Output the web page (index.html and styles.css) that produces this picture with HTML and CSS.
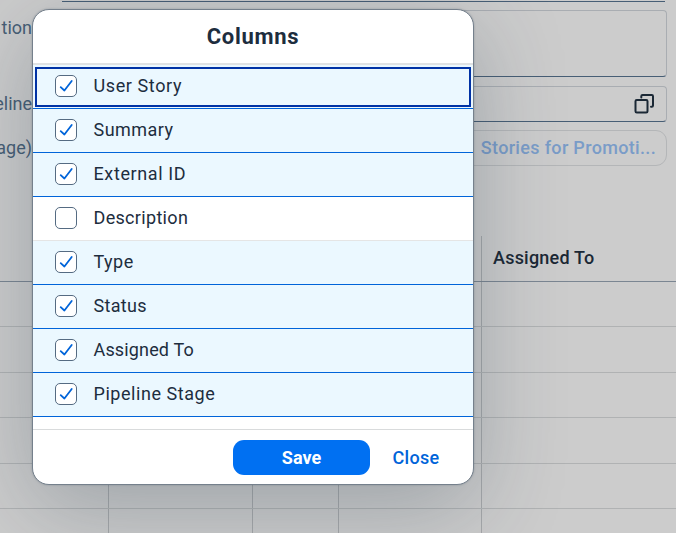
FILE: index.html
```html
<!DOCTYPE html>
<html lang="en">
<head>
<meta charset="utf-8">
<title>Columns</title>
<link rel="stylesheet" href="styles.css">
</head>
<body>
<svg class="defs" aria-hidden="true"><symbol id="check" viewBox="0 0 20 20"><path d="M4.7 11.2 8.4 14.5 15.7 5" fill="none" stroke="#0064d9" stroke-width="1.8" stroke-linecap="round" stroke-linejoin="round"/></symbol></svg>
<main class="page">
  <section class="form">
    <div class="field field-top"></div>
    <label class="label"><span>tion</span></label>
    <div class="field field-area"></div>
    <label class="label"><span>eline</span></label>
    <div class="field field-help">
      <svg class="help-icon" width="20" height="20" viewBox="0 0 20 20" fill="none" stroke="#1b2835" stroke-width="2" stroke-linejoin="round" stroke-linecap="round"><rect x="1.5" y="6" width="12" height="12.6" rx="1.3"/><path d="M7.3 3.4V2.2Q7.3 1 8.5 1H17.8Q19 1 19 2.2V11.6Q19 12.8 17.8 12.8H17"/></svg>
    </div>
    <label class="label"><span>age)</span></label>
    <button class="ghost"><span>Stories for Promoti...</span></button>
  </section>
  <section class="table">
    <div class="tr th"><i></i><i></i><i></i><i></i><b>Assigned To</b></div>
    <div class="tr"><i></i><i></i><i></i><i></i><i></i></div>
    <div class="tr tall"><i></i><i></i><i></i><i></i><i></i></div>
    <div class="tr"><i></i><i></i><i></i><i></i><i></i></div>
    <div class="tr tall"><i></i><i></i><i></i><i></i><i></i></div>
    <div class="tr"><i></i><i></i><i></i><i></i><i></i></div>
    <div class="tr tall"><i></i><i></i><i></i><i></i><i></i></div>
  </section>
</main>
<div class="dialog" role="dialog">
  <header class="title"><span>Columns</span></header>
  <ul class="list">
    <li class="item on focus"><svg class="box"><use href="#check"/></svg><span class="t1">User Story</span></li>
    <li class="item on"><svg class="box"><use href="#check"/></svg><span class="t2">Summary</span></li>
    <li class="item on"><svg class="box"><use href="#check"/></svg><span class="t3">External ID</span></li>
    <li class="item"><svg class="box"></svg><span class="t4">Description</span></li>
    <li class="item on"><svg class="box"><use href="#check"/></svg><span class="t5">Type</span></li>
    <li class="item on"><svg class="box"><use href="#check"/></svg><span class="t6">Status</span></li>
    <li class="item on"><svg class="box"><use href="#check"/></svg><span class="t7">Assigned To</span></li>
    <li class="item on"><svg class="box"><use href="#check"/></svg><span class="t8">Pipeline Stage</span></li>
  </ul>
  <footer class="footer"><button class="save">Save</button><button class="close">Close</button></footer>
</div>
</body>
</html>
```
FILE: styles.css
```css
* { box-sizing: border-box; }
html, body { margin: 0; height: 533px; overflow: hidden; }
body { position: relative; background: #ccc; font: 18px/22px Roboto, "Liberation Sans", sans-serif; color: #1d2d3e; }
button { font: inherit; margin: 0; padding: 0; border: 0; background: none; }
.defs { position: absolute; width: 0; height: 0; }
.page { height: 533px; overflow: hidden; display: flex; flex-direction: column; }

.form { flex: none; height: 236px; display: grid; grid-template-columns: 32px 605px; column-gap: 30px; grid-template-rows: 10px 76px 44px 36px; align-content: start; }
.field { border: 1px solid #a9adb2; border-bottom-color: #475e75; border-radius: 4px; }
.field-top { grid-column: 2; height: 2px; border-width: 0 0 1px; border-radius: 0; margin-right: 2px; }
.field-area { height: 67px; }
.field-help { height: 36px; display: flex; align-items: center; justify-content: flex-end; padding-right: 12px; }
.label { display: flex; justify-content: flex-end; padding-top: 7px; color: #475e75; }
.ghost { height: 36px; border: 1px solid #b4b6b8; border-radius: 11px; color: #7a9cc8; font-weight: 500; letter-spacing: .33px; display: flex; align-items: center; justify-content: flex-end; padding-right: 10px; }

.table { flex: none; }
.tr { display: grid; grid-template-columns: 109px 144px 86px 143px 1fr; height: 45px; border-bottom: 1px solid #b0b2b3; }
.tall { height: 46px; }
.th { height: 46px; border-bottom-color: #7b8692; }
.tr > i:not(:last-child) { border-right: 1px solid #a6a8aa; }
.th b { font-weight: 500; letter-spacing: .22px; padding: 11px 0 0 11px; color: #1b2835; }

.dialog { position: absolute; left: 32px; top: 9px; width: 442px; height: 476px; border: 1px solid #75808c; border-radius: 17px; background: #fff; overflow: hidden; display: flex; flex-direction: column; box-shadow: 0 0 2px rgba(34,53,72,.3), 0 22px 90px rgba(34,53,72,.28); }
.title { height: 55px; border-bottom: 2px solid #e0e2e3; display: flex; align-items: center; justify-content: center; font-weight: 700; font-size: 22px; letter-spacing: .7px; }
.list { list-style: none; margin: 0; padding: 0; height: 364px; }
.item { height: 44px; display: flex; align-items: center; gap: 16.5px; padding: 0 0 0 22px; border-bottom: 1px solid #e5e5e5; }
.item.on { background: #ebf8ff; border-bottom-color: #0064d9; }
.item.focus { outline: 2px solid #0032a5; outline-offset: -4px; }
.item span { margin-top: -2px; }
.t1 { letter-spacing: .6px; }
.t2 { letter-spacing: .45px; }
.t3 { letter-spacing: .62px; }
.t4 { letter-spacing: .32px; }
.t5 { letter-spacing: .5px; }
.t6 { letter-spacing: .3px; }
.t7 { letter-spacing: .15px; }
.t8 { letter-spacing: .55px; }
.box { width: 22px; height: 22px; margin-bottom: 2px; border: 1px solid #556b82; border-radius: 5px; background: #fff; }
.footer { flex: 1; border-top: 1px solid #d9dbdc; display: flex; padding-top: 10px; font-weight: 500; }
.save { width: 137px; height: 35px; margin-left: 200px; background: #0070f2; color: #fff; border-radius: 11px; font-weight: 700; }
.close { width: 92px; height: 35px; color: #0064d9; letter-spacing: .35px; }
```
